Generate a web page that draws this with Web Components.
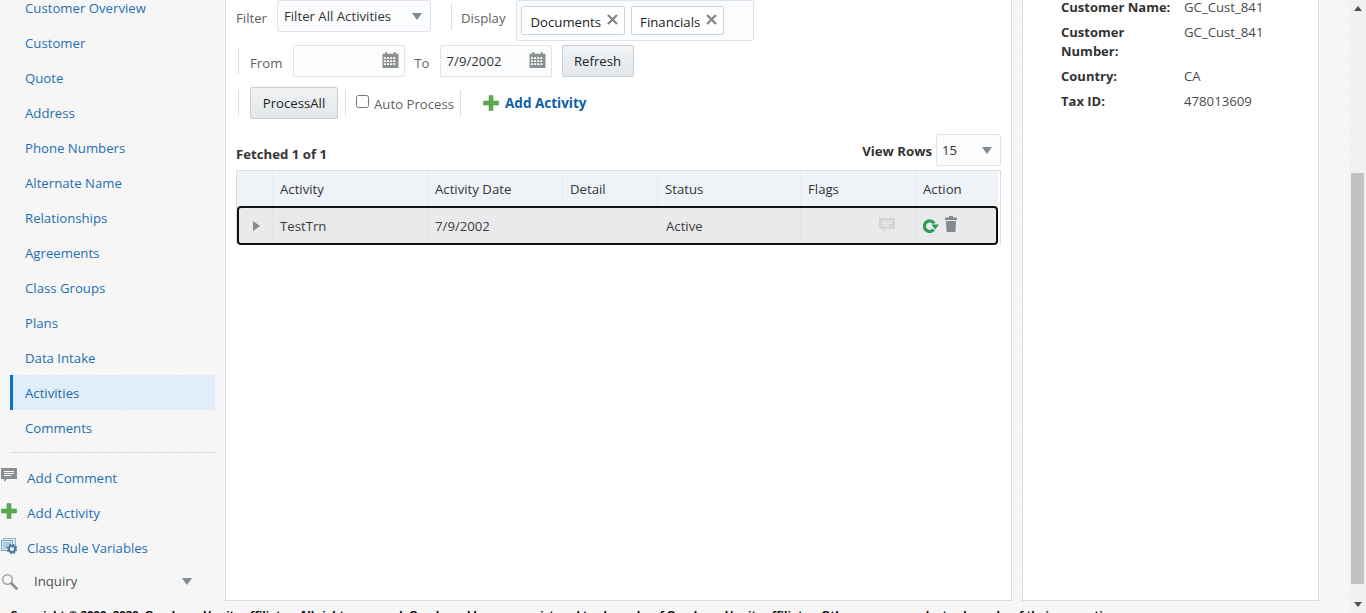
<!DOCTYPE html>
<html>
<head>
<meta charset="utf-8">
<title>Activities</title>
<style>
  html, body { margin: 0; height: 613px; overflow: hidden; }
  body { font: 13.2px "Open Sans", "Noto Sans", sans-serif; color: #333; }
</style>
</head>
<body>
<app-shell>
  <side-nav slot="nav">
    <nav-link>Customer Overview</nav-link>
    <nav-link>Customer</nav-link>
    <nav-link>Quote</nav-link>
    <nav-link>Address</nav-link>
    <nav-link>Phone Numbers</nav-link>
    <nav-link>Alternate Name</nav-link>
    <nav-link>Relationships</nav-link>
    <nav-link>Agreements</nav-link>
    <nav-link>Class Groups</nav-link>
    <nav-link>Plans</nav-link>
    <nav-link>Data Intake</nav-link>
    <nav-link active>Activities</nav-link>
    <nav-link>Comments</nav-link>
    <action-link slot="actions" icon="comment">Add Comment</action-link>
    <action-link slot="actions" icon="plus">Add Activity</action-link>
    <action-link slot="actions" icon="rules" style="font-size:13.1px">Class Rule Variables</action-link>
  </side-nav>
  <activities-panel slot="main"></activities-panel>
  <customer-card slot="aside"></customer-card>
</app-shell>

<script>
const ICONS = {
  comment: '<svg width="16" height="15" viewBox="0 0 16 15"><path fill="#8a8d90" d="M0 0h16v11H6l-3 3v-3H0z"/><path fill="#fff" d="M3 3h10v1H3zM3 5h10v1H3zM3 7h7v1H3z"/></svg>',
  plus: '<svg width="16" height="16" viewBox="0 0 16 16"><path fill="#5aa850" stroke="#4a9442" stroke-width=".5" d="M6 .5h4v5.500h5.500v4H10v5.500H6V10H.5V6H6z"/></svg>',
  rules: '<svg width="16" height="16" viewBox="0 0 16 16"><rect x="2.500" y=".5" width="12" height="9" fill="#e4eff7" stroke="#8fb5d3"/><rect x=".5" y="2.500" width="11" height="10" fill="#dbe9f4" stroke="#7ba3c7"/><rect x="2" y="4" width="8" height="7" fill="#a9cbe4"/><circle cx="11" cy="11" r="3.200" fill="#eaf1f7" stroke="#54789c" stroke-width="2.200"/><circle cx="11" cy="11" r="4.800" fill="none" stroke="#54789c" stroke-width="1.200" stroke-dasharray="1.900 1.900"/></svg>',
  search: '<svg width="17" height="17" viewBox="0 0 17 17"><circle cx="6.500" cy="6.500" r="4.800" fill="none" stroke="#a6a6a6" stroke-width="1.600"/><path stroke="#8c8c8c" stroke-width="2.600" stroke-linecap="round" d="M10.500 10.500l5 5"/></svg>',
  calendar: '<svg width="17" height="17" viewBox="0 0 17 18"><path fill="#8c8f92" d="M0 3h3V1h2v2h7V1h2v2h3v15H0z"/><path fill="#fff" d="M1.500 6.500h2.200v2H1.500zM4.800 6.500H7v2H4.800zM8.100 6.500h2.200v2H8.100zM11.400 6.500h2.200v2h-2.200zM1.500 9.700h2.200v2H1.500zM4.800 9.700H7v2H4.800zM8.100 9.700h2.200v2H8.100zM11.400 9.700h2.200v2h-2.200zM1.500 12.900h2.200v2H1.500zM4.800 12.900H7v2H4.800zM8.100 12.900h2.200v2H8.100zM11.400 12.900h2.200v2h-2.200z"/></svg>',
  refresh: '<svg width="16" height="14" viewBox="0 0 16 14"><path fill="none" stroke="#2f9e57" stroke-width="3.200" d="M10.800 10.600A5.300 5.300 0 1 1 11.200 4.400"/><path fill="#2f9e57" d="M8.500 5.500H16l-3.700 5z"/></svg>',
  trash: '<svg class="trash" width="12" height="16" viewBox="0 0 12 16"><path fill="#85888b" d="M4 0h4v1.500h4V4H0V1.500h4zM1 5h10l-.6 11H1.600z"/></svg>'
};

class AppShell extends HTMLElement {
  constructor() {
    super();
    this.attachShadow({mode: 'open'}).innerHTML = `
      <style>
        :host { display: flex; height: 613px; overflow: hidden;
          background: repeating-linear-gradient(135deg, #f8f8f8 0 1px, #f5f5f5 1px 3px); }
        .page { flex: 1; min-width: 0; display: flex; flex-direction: column; }
        .columns { height: 601px; flex: none; display: grid; grid-template-columns: 215px 787px 297px; column-gap: 10px; align-items: stretch; }
        .foot { padding: 7px 0 0 10px; font-weight: 700; font-size: 11.35px; line-height: 14px; color: #000; white-space: nowrap; }
        .bar { width: 17px; flex: none; background: #f1f1f1; display: flex; flex-direction: column; align-items: center; justify-content: space-between; padding: 6px 0; box-sizing: border-box; }
        .thumb { width: 13px; background: #c1c1c1; position: absolute; top: 173px; height: 411px; }
        .up { border: 4px solid transparent; border-bottom: 5px solid #505050; border-top: 0; width: 0; }
        .down { border: 4px solid transparent; border-top: 5px solid #505050; border-bottom: 0; width: 0; }
      </style>
      <div class="page">
        <div class="columns">
          <slot name="nav"></slot>
          <slot name="main"></slot>
          <slot name="aside"></slot>
        </div>
        <div class="foot">Copyright © 2000, 2020, Oracle and/or its affiliates. All rights reserved. Oracle and Java are registered trademarks of Oracle and/or its affiliates. Other names may be trademarks of their respective owners.</div>
      </div>
      <div class="bar"><span class="up"></span><span class="thumb"></span><span class="down"></span></div>`;
  }
}

class SideNav extends HTMLElement {
  constructor() {
    super();
    this.attachShadow({mode: 'open'}).innerHTML = `
      <style>
        :host { display: block; margin-top: -10px; }
        .links { margin-left: 10px; padding-bottom: 7px; border-bottom: 1px solid #cfe0ea; }
        .actions { padding-top: 7px; }
        .inquiry { display: flex; align-items: center; height: 32px; padding-left: 1px; color: #4f4f4f; }
        .inquiry span { margin-left: 16px; flex: 1; }
        .inquiry i { border: 5px solid transparent; border-top: 7px solid #7f8a94; border-bottom: 0; margin-right: 23px; }
      </style>
      <div class="links"><slot></slot></div>
      <div class="actions"><slot name="actions"></slot></div>
      <div class="inquiry">${ICONS.search}<span>Inquiry</span><i></i></div>`;
  }
}

class NavLink extends HTMLElement {
  constructor() {
    super();
    this.attachShadow({mode: 'open'}).innerHTML = `
      <style>
        :host { display: flex; align-items: center; height: 35px; box-sizing: border-box; padding-left: 15px; color: #1f6fb2; white-space: nowrap; }
        :host([active]) { background: #dfeefa; border-left: 3px solid #0572ce; padding-left: 12px; color: #2467a5; }
      </style>
      <slot></slot>`;
  }
}

class ActionLink extends HTMLElement {
  constructor() {
    super();
    const icon = ICONS[this.getAttribute('icon')];
    this.attachShadow({mode: 'open'}).innerHTML = `
      <style>
        :host { display: flex; align-items: center; height: 35px; padding-left: 1px; color: #1f6fb2; white-space: nowrap; font-size: 13.4px; }
        svg { margin: -4px 10px 0 0; flex: none; }
      </style>
      ${icon}<slot></slot>`;
  }
}

class UiSelect extends HTMLElement {
  constructor() {
    super();
    this.attachShadow({mode: 'open'}).innerHTML = `
      <style>
        :host { display: inline-flex; align-items: center; height: 32px; box-sizing: border-box; padding: 0 8px 1px 6px; background: #fbfcfd; border: 1px solid #dfe4ea; border-radius: 2px; color: #333; }
        span { flex: 1; }
        i { border: 5px solid transparent; border-top: 7px solid #7f8a94; border-bottom: 0; margin-top: 1px; }
      </style>
      <span><slot></slot></span><i></i>`;
  }
}

class DateInput extends HTMLElement {
  constructor() {
    super();
    this.attachShadow({mode: 'open'}).innerHTML = `
      <style>
        :host { display: inline-flex; align-items: center; width: 112px; height: 32px; box-sizing: border-box; padding: 0 5px 0 6px; background: #fbfcfd; border: 1px solid #dfe4ea; border-radius: 2px; }
        span { flex: 1; }
        svg { margin-top: -3px; }
      </style>
      <span><slot></slot></span>${ICONS.calendar}`;
  }
}

class TagChip extends HTMLElement {
  constructor() {
    super();
    this.attachShadow({mode: 'open'}).innerHTML = `
      <style>
        :host { display: inline-flex; align-items: center; height: 29px; box-sizing: border-box; padding: 3px 6px 0 8px; gap: 6px; background: #fff; border: 1px solid #c9d5df; border-radius: 2px; color: #222; }
        svg { margin-top: -5px; }
      </style>
      <slot></slot>
      <svg width="11" height="11" viewBox="0 0 11 11"><path stroke="#85888b" stroke-width="2.400" d="M1 1l9 9M10 1l-9 9"/></svg>`;
  }
}

class UiButton extends HTMLElement {
  constructor() {
    super();
    this.attachShadow({mode: 'open'}).innerHTML = `
      <style>
        :host { display: inline-flex; align-items: center; justify-content: center; height: 32px; box-sizing: border-box; padding: 0 12px; background: linear-gradient(#f0f2f4, #e4e8ea); border: 1px solid #c6ced6; border-radius: 2px; color: #222; }
      </style>
      <slot></slot>`;
  }
}

class ActivitiesPanel extends HTMLElement {
  constructor() {
    super();
    this.attachShadow({mode: 'open'}).innerHTML = `
      <style>
        :host { display: block; margin-top: -10px; background: #fff; border: 1px solid #d6dfe6; border-top: 0; box-sizing: border-box; padding: 10px 10px 0 10px; }
        .row { display: flex; align-items: center; }
        .sep { width: 1px; background: #d6dfe6; height: 26px; flex: none; }
        label { color: #5f5f5f; }
        .r1 { align-items: flex-start; height: 45px; margin-bottom: -5px; }
        .r2 label { padding-top: 4px; }
        .r1 .filter { margin: 9px 10px 0 0; }
        .r1 .display { margin: 9px 10px 0 9px; }
        .r1 .sep { margin: 4px 0 0 20px; }
        .tags { display: flex; gap: 6px; width: 238px; height: 41px; box-sizing: border-box; padding: 5px 4px; margin-left: 1px; background: #fbfcfd; border: 1px solid #dfe4ea; border-radius: 2px; }
        .r2 { height: 42px; margin-left: 2px; }
        .r2 .from { margin: 0 11px 0 11px; }
        .r2 .to { margin: 0 10px 0 9px; }
        .r2 ui-button { margin-left: 10px; width: 72px; }
        .r3 { height: 42px; margin-left: 2px; }
        .r3 ui-button { width: 88px; margin-left: 11px; }
        .chk { width: 13px; height: 13px; box-sizing: border-box; margin: -3px 5px 0 10px; border: 1px solid #767676; border-radius: 2.5px; background: #fff; }
        .r3 label { padding-top: 2px; }
        .add { margin-left: 22px; display: flex; align-items: center; gap: 6px; color: #0a5fa8; font-weight: 700; font-size: 13.5px; }
        .grid-head { display: flex; align-items: center; justify-content: space-between; height: 40px; margin-top: 6px; }
        b { color: #333; }
        .vr { display: flex; align-items: center; gap: 4px; }
        .vr ui-select { width: 65px; padding-left: 5px; }
      </style>
      <div class="row r1">
        <label class="filter">Filter</label>
        <ui-select style="width:154px">Filter All Activities</ui-select>
        <span class="sep"></span>
        <label class="display">Display</label>
        <div class="tags"><tag-chip>Documents</tag-chip><tag-chip>Financials</tag-chip></div>
      </div>
      <div class="row r2">
        <span class="sep"></span>
        <label class="from">From</label>
        <date-input></date-input>
        <label class="to">To</label>
        <date-input>7/9/2002</date-input>
        <ui-button>Refresh</ui-button>
      </div>
      <div class="row r3">
        <span class="sep"></span>
        <ui-button>ProcessAll</ui-button>
        <span class="sep" style="margin-left:7px"></span>
        <span class="chk"></span>
        <label>Auto Process</label>
        <span class="sep" style="margin-left:6px"></span>
        <span class="add">${ICONS.plus}Add Activity</span>
      </div>
      <div class="grid-head">
        <b style="padding-top:8px">Fetched 1 of 1</b>
        <span class="vr"><b style="padding-top:2px">View Rows</b><ui-select>15</ui-select></span>
      </div>
      <activity-table></activity-table>`;
  }
}

class ActivityTable extends HTMLElement {
  constructor() {
    super();
    this.attachShadow({mode: 'open'}).innerHTML = `
      <style>
        :host { display: block; width: 765px; border: 1px solid #d6dfe6; border-bottom: 0; box-sizing: border-box; }
        .head, .body { display: grid; margin-right: 2px; }
        .head { grid-template-columns: 36px 155px 135px 95px 143px 115px 1fr; height: 35px; background: #eff3f8; color: #333; }
        .head div { display: flex; align-items: center; padding-left: 7px; border-right: 1px solid #e6ebf0; }
        .head div:last-child { border-right: 0; }
        .body { grid-template-columns: 34px 155px 135px 96px 142px 115px 1fr; height: 39px; background: #e9eaec; box-sizing: border-box; border: 2px solid #111; border-radius: 4px; color: #3c3c3c; }
        .body div { display: flex; align-items: center; padding-left: 7px; border-right: 1px solid #e4e5e7; }
        .body div:last-child { border-right: 0; }
        .tri { width: 0; border: 5px solid transparent; border-left: 7px solid #85888b; border-right: 0; margin-left: 7px; }
        .flags { justify-content: flex-end; padding-right: 20px; }
        .flags svg { margin-bottom: 1px; }
        .act { gap: 6px; }
        .act .trash { margin-top: -3px; }
      </style>
      <div class="head">
        <div></div><div>Activity</div><div>Activity Date</div><div>Detail</div><div>Status</div><div>Flags</div><div>Action</div>
      </div>
      <div class="body">
        <div><span class="tri"></span></div>
        <div>TestTrn</div>
        <div>7/9/2002</div>
        <div></div>
        <div>Active</div>
        <div class="flags"><svg width="16" height="15" viewBox="0 0 16 15"><path fill="#d3d5d7" d="M0 0h16v11H7l-3 3v-3H0z"/><path fill="#eee" d="M3 3h10v1H3zM3 5h10v1H3zM3 7h7v1H3z"/></svg></div>
        <div class="act">${ICONS.refresh}${ICONS.trash}</div>
      </div>`;
  }
}

class CustomerCard extends HTMLElement {
  constructor() {
    super();
    this.attachShadow({mode: 'open'}).innerHTML = `
      <style>
        :host { display: block; margin-top: -10px; background: #fff; border: 1px solid #d6dfe6; border-top: 0; box-sizing: border-box; padding: 8px 0 0 38px; }
        dl { margin: 0; display: grid; grid-template-columns: 123px 1fr; row-gap: 6px; line-height: 19px; }
        dt { font-weight: 700; font-size: 13px; color: #333; width: 115px; }
        dd { margin: 0; color: #4a4a4a; }
      </style>
      <dl>
        <dt>Customer Name:</dt><dd>GC_Cust_841</dd>
        <dt>Customer Number:</dt><dd>GC_Cust_841</dd>
        <dt>Country:</dt><dd>CA</dd>
        <dt>Tax ID:</dt><dd>478013609</dd>
      </dl>`;
  }
}

customElements.define('app-shell', AppShell);
customElements.define('side-nav', SideNav);
customElements.define('nav-link', NavLink);
customElements.define('action-link', ActionLink);
customElements.define('ui-select', UiSelect);
customElements.define('date-input', DateInput);
customElements.define('tag-chip', TagChip);
customElements.define('ui-button', UiButton);
customElements.define('activities-panel', ActivitiesPanel);
customElements.define('activity-table', ActivityTable);
customElements.define('customer-card', CustomerCard);
</script>
</body>
</html>
